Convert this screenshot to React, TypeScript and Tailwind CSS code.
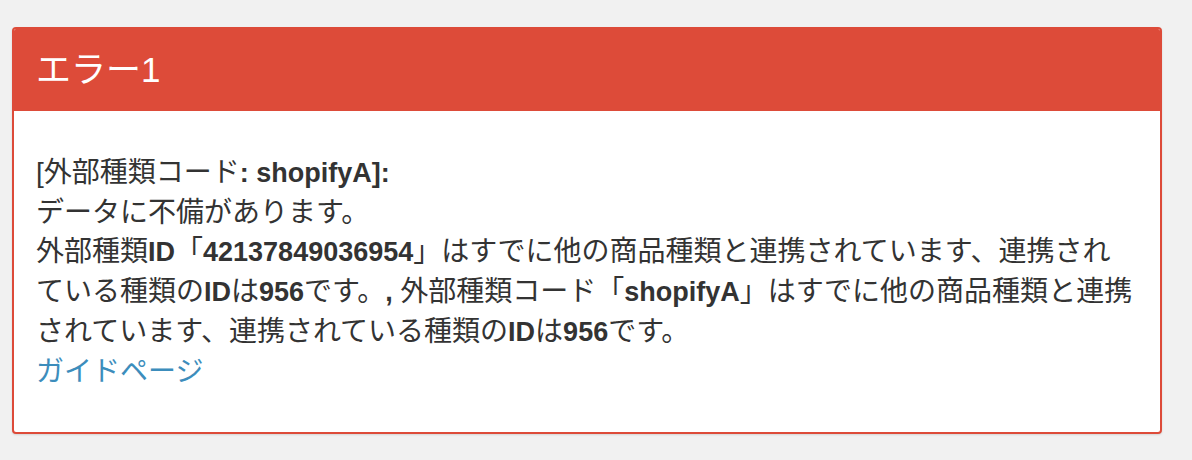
import React from "react";

const B = ({ children }: { children: React.ReactNode }) => (
  <span className="font-bold text-[27px]">{children}</span>
);

export default function App() {
  return (
    <div
      className="min-h-[460px] w-full bg-[#f1f1f1] pt-[27px] px-[12px]"
      style={{ fontFamily: '"Liberation Sans", "Noto Sans CJK JP", sans-serif' }}
    >
      <div className="w-[1150px] rounded-[4px] border-2 border-[#dd4b39] bg-white shadow-[0_1px_2px_rgba(0,0,0,0.12)] overflow-hidden">
        <div className="h-[84px] bg-[#dd4b39] flex items-center px-[22px] -mx-[2px] -mt-[2px] pt-[2px]">
          <h3 className="text-[35px] leading-none font-normal text-white pl-[2px] -mt-[2px]">
            エラー1
          </h3>
        </div>
        <div className="pt-[42px] pb-[41px] pl-[22px] pr-[25px] text-[28px] leading-[39px] text-[#333333]">
          <div>
            [外部種類コード<B>: shopifyA]:</B>
          </div>
          <div>データに不備があります。</div>
          <div>
            外部種類<B>ID</B>「<B>42137849036954</B>
            」はすでに他の商品種類と連携されています、連携されている種類の<B>ID</B>は
            <B>956</B>です。<B>, </B>外部種類コード「<B>shopifyA</B>
            」はすでに他の商品種類と連携されています、連携されている種類の<B>ID</B>は
            <B>956</B>です。
          </div>
          <div>
            <a href="#" className="text-[#3c8dbc]">
              ガイドページ
            </a>
          </div>
        </div>
      </div>
    </div>
  );
}
